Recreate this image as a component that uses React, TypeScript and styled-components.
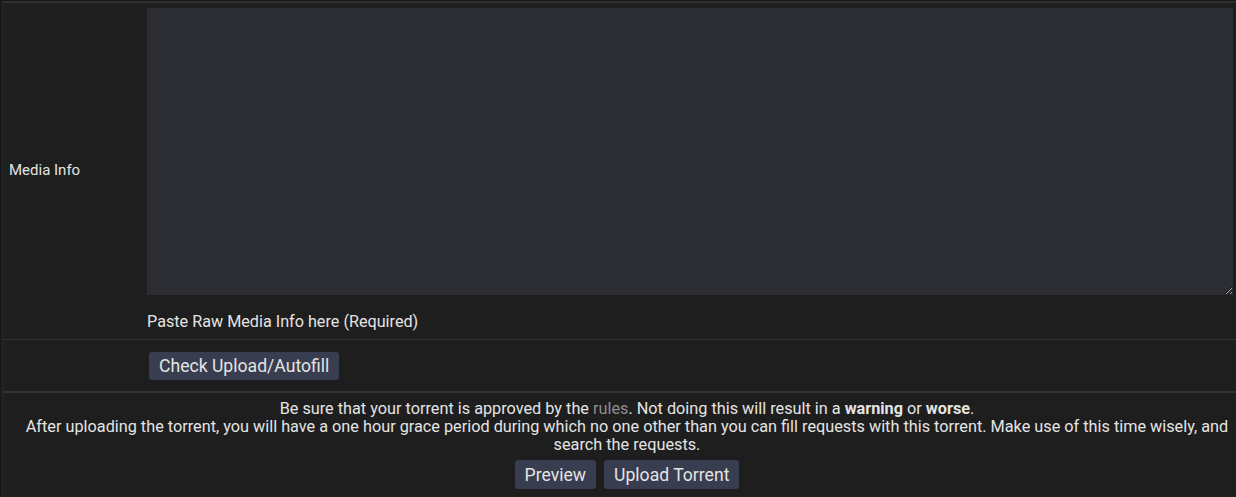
import React from 'react'
import styled, { createGlobalStyle } from 'styled-components'

const GlobalStyle = createGlobalStyle`
  body {
    margin: 0;
    background: #18181b;
    color: #e4e4e4;
    font-family: Roboto, "Liberation Sans", sans-serif;
  }
`

const Page = styled.div`
  padding: 1px 0 0 2px;
`

const Table = styled.div`
  border-top: 2px solid #2f2f2f;
  border-left: 1px solid #2a2a2e;
  background: #1e1e1e;
`

const Row = styled.div<{ $thick?: boolean }>`
  display: grid;
  grid-template-columns: 139px 1fr;
  border-bottom: ${(p) => (p.$thick ? '2px' : '1px')} solid #333;
`

const Label = styled.div`
  display: flex;
  align-items: center;
  padding: 0 6px 2px;
  font-size: 15px;
`

const Cell = styled.div<{ $pad?: string }>`
  padding: ${(p) => p.$pad || '5px 3px 5px 5px'};
`

const TextArea = styled.textarea`
  display: block;
  box-sizing: border-box;
  width: 100%;
  height: 287px;
  margin: 0;
  border: none;
  background: #2c2d32;
  color: #e4e4e4;
  outline: none;
`

const Hint = styled.div`
  margin-top: 18px;
  font-size: 16.2px;
  line-height: 18px;
  padding-bottom: 3px;
`

const Button = styled.button<{ $tall?: boolean }>`
  font-family: Roboto, "Liberation Sans", sans-serif;
  font-size: 17.6px;
  color: #e4e4e4;
  background: #383d4f;
  border: none;
  border-radius: 3px;
  height: ${(p) => (p.$tall ? '29px' : '28px')};
  padding: 0 10px;
  cursor: pointer;
`

const Footer = styled.div`
  text-align: center;
  font-size: 16.25px;
  line-height: 18px;
  padding: 7px 0 8px 15px;
`

const Rules = styled.a`
  color: #8e8e8e;
  text-decoration: none;
`

const Actions = styled.div`
  display: flex;
  justify-content: center;
  gap: 8px;
  margin-top: 6px;
`

export default function App() {
  return (
    <Page>
      <GlobalStyle />
      <Table>
        <Row>
          <Label>Media Info</Label>
          <Cell>
            <TextArea />
            <Hint>Paste Raw Media Info here (Required)</Hint>
          </Cell>
        </Row>
        <Row $thick>
          <div />
          <Cell $pad="12px 7px 11px">
            <Button>Check Upload/Autofill</Button>
          </Cell>
        </Row>
        <Footer>
          Be sure that your torrent is approved by the <Rules href="#">rules</Rules>. Not doing
          this will result in a <b>warning</b> or <b>worse</b>.
          <br />
          After uploading the torrent, you will have a one hour grace period during which no one
          other than you can fill requests with this torrent. Make use of this time wisely, and
          search the requests.
          <Actions>
            <Button $tall>Preview</Button>
            <Button $tall>Upload Torrent</Button>
          </Actions>
        </Footer>
      </Table>
    </Page>
  )
}
